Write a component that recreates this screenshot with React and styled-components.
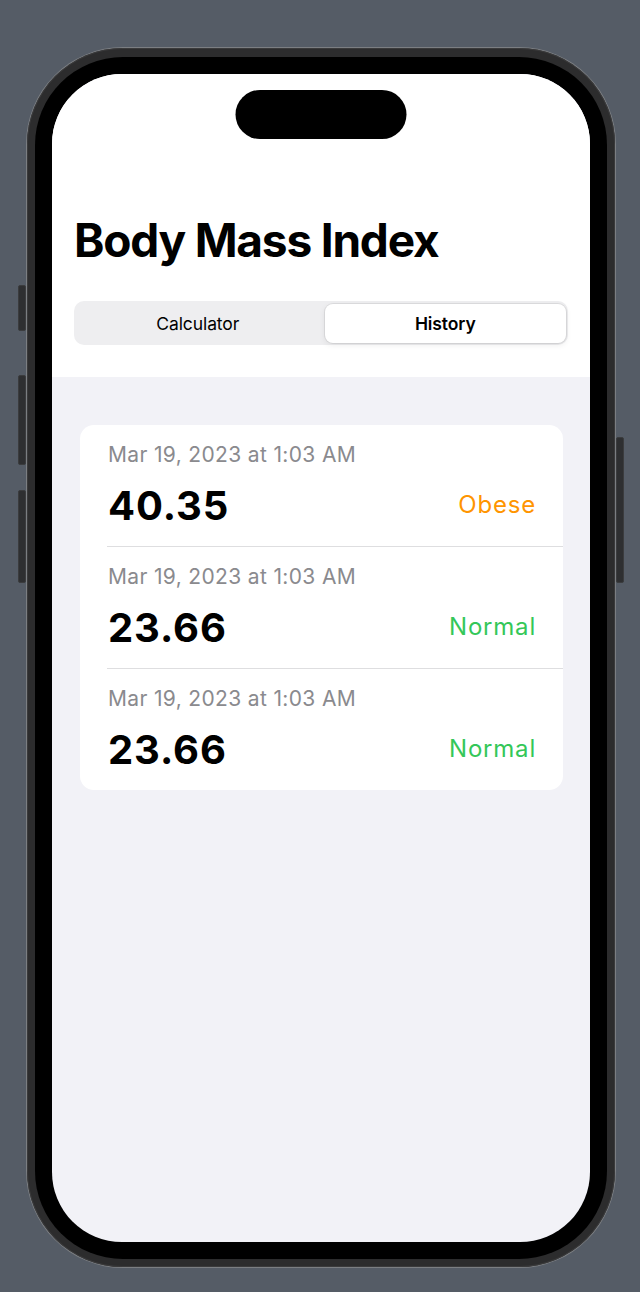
import React from "react";
import styled, { createGlobalStyle } from "styled-components";

const GlobalStyle = createGlobalStyle`
  html, body {
    margin: 0;
    padding: 0;
    background: #555c66;
  }
  body {
    font-family: Inter, "Noto Sans", "Liberation Sans", sans-serif;
    -webkit-font-smoothing: antialiased;
  }
  * { box-sizing: border-box; }
`;

const Stage = styled.div`
  width: 640px;
  height: 1292px;
  display: flex;
  justify-content: center;
  align-items: flex-start;
  padding: 48px 0 0 2px;
  background: #555c66;
  overflow: hidden;
`;

const Phone = styled.div`
  position: relative;
  width: 588px;
  height: 1219px;
  padding: 9px 8px 8px;
  border-radius: 96px;
  background: #2c2c2d;
  box-shadow: 0 0 0 1px #7b7e82, inset 0 0 0 1px #3a3a3b;
`;

const SideButton = styled.div`
  position: absolute;
  top: ${(p) => p.$top}px;
  height: ${(p) => p.$height}px;
  width: 8px;
  ${(p) => (p.$right ? "right: -9px;" : "left: -9px;")}
  background: #2e2f31;
  border: 1px solid #3b3c3e;
  border-radius: 2px;
`;

const Bezel = styled.div`
  height: 100%;
  padding: 17px;
  border-radius: 88px;
  background: #000;
`;

const Screen = styled.div`
  position: relative;
  height: 100%;
  border-radius: 70px;
  overflow: hidden;
  background: #f2f2f7;
  display: flex;
  flex-direction: column;
`;

const Island = styled.div`
  position: absolute;
  top: 16px;
  left: 50%;
  transform: translateX(-50%);
  width: 171px;
  height: 49px;
  border-radius: 25px;
  background: #000;
`;

const Header = styled.header`
  background: #fff;
  padding: 138px 22px 32px 22px;
`;

const Title = styled.h1`
  margin: 0 0 33px;
  font-size: 46px;
  line-height: 56px;
  font-weight: 700;
  letter-spacing: -1.2px;
  color: #000;
`;

const Segmented = styled.div`
  display: grid;
  grid-template-columns: 1fr 1fr;
  column-gap: 6px;
  height: 44px;
  padding: 3px 2px 2px 3px;
  border-radius: 10px;
  background: #eeeef0;
`;

const Segment = styled.div`
  display: flex;
  align-items: center;
  justify-content: center;
  border-radius: 8px;
  font-size: 17.5px;
  letter-spacing: -0.1px;
  font-weight: ${(p) => (p.$active ? 600 : 400)};
  color: #000;
  background: ${(p) => (p.$active ? "#fff" : "transparent")};
  box-shadow: ${(p) =>
    p.$active
      ? "0 2px 6px rgba(0,0,0,0.08), 0 0 0 1px rgba(0,0,0,0.07)"
      : "none"};
`;

const Content = styled.main`
  flex: 1;
  padding: 48px 27px 0 28px;
`;

const Card = styled.section`
  background: #fff;
  border-radius: 14px;
  overflow: hidden;
`;

const Row = styled.div`
  margin-left: 27px;
  padding: 17px 27px 15px 1px;
  display: flex;
  flex-direction: column;
  gap: 15px;
  border-bottom: ${(p) => (p.$last ? "none" : "1px solid #dedee0")};
`;

const DateText = styled.div`
  font-size: 21px;
  line-height: 26px;
  color: #8a8a8e;
  letter-spacing: 0.35px;
`;

const ValueLine = styled.div`
  display: flex;
  align-items: center;
  justify-content: space-between;
  height: 48px;
`;

const Value = styled.div`
  font-size: 40px;
  line-height: 48px;
  font-weight: 700;
  letter-spacing: 0.9px;
  color: #000;
  transform: translateY(-1px);
`;

const Status = styled.div`
  font-size: 24px;
  line-height: 30px;
  color: ${(p) => p.$color};
  letter-spacing: 0.8px;
  transform: translateY(-2px);
`;

const records = [
  { date: "Mar 19, 2023 at 1:03 AM", value: "40.35", status: "Obese", color: "#ff9500" },
  { date: "Mar 19, 2023 at 1:03 AM", value: "23.66", status: "Normal", color: "#34c759" },
  { date: "Mar 19, 2023 at 1:03 AM", value: "23.66", status: "Normal", color: "#34c759" },
];

export default function App() {
  return (
    <>
      <GlobalStyle />
      <Stage>
        <Phone>
          <SideButton $top={237} $height={46} />
          <SideButton $top={327} $height={90} />
          <SideButton $top={442} $height={93} />
          <SideButton $right $top={389} $height={146} />
          <Bezel>
            <Screen>
              <Island />
              <Header>
                <Title>Body Mass Index</Title>
                <Segmented>
                  <Segment>Calculator</Segment>
                  <Segment $active>History</Segment>
                </Segmented>
              </Header>
              <Content>
                <Card>
                  {records.map((r, i) => (
                    <Row key={i} $last={i === records.length - 1}>
                      <DateText>{r.date}</DateText>
                      <ValueLine>
                        <Value>{r.value}</Value>
                        <Status $color={r.color}>{r.status}</Status>
                      </ValueLine>
                    </Row>
                  ))}
                </Card>
              </Content>
            </Screen>
          </Bezel>
        </Phone>
      </Stage>
    </>
  );
}
